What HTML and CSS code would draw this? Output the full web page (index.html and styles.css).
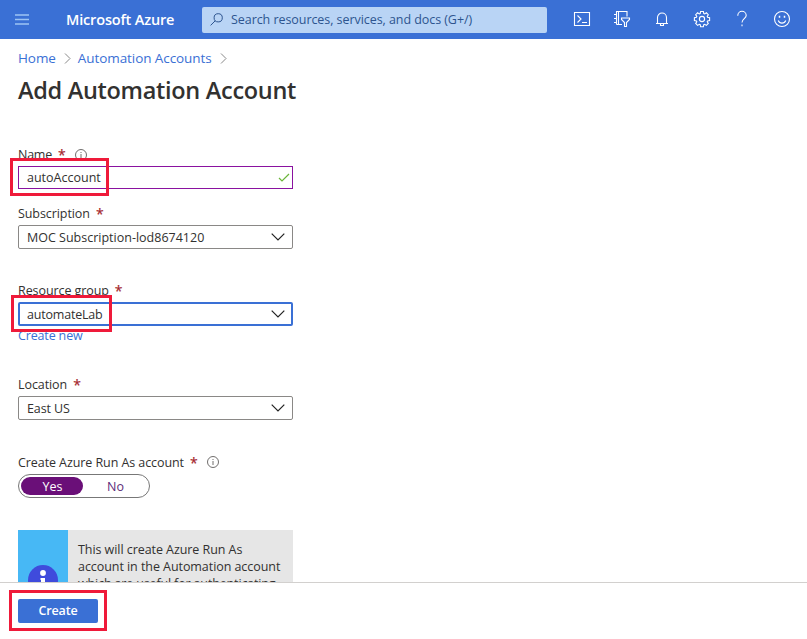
FILE: index.html
```html
<!DOCTYPE html>
<html lang="en">
<head>
<meta charset="utf-8">
<title>Add Automation Account - Microsoft Azure</title>
<link rel="stylesheet" href="styles.css">
</head>
<body>
<div class="app">
  <header class="topbar">
    <svg class="menu" width="14" height="11" viewBox="0 0 14 11"><path d="M0 1h14M0 5.5h14M0 10h14"/></svg>
    <span class="brand">Microsoft Azure</span>
    <div class="search">
      <svg width="13" height="13" viewBox="0 0 13 13"><circle cx="8.2" cy="4.8" r="4.1"/><path d="M5.2 7.8 .6 12.4"/></svg>
      <span>Search resources, services, and docs (G+/)</span>
    </div>
    <nav class="tools">
      <svg viewBox="0 0 18 18"><path d="M1.5 2.5h15v13h-15zM4.5 5.5l3.5 3.5-3.5 3.5M9 12.5h5"/></svg>
      <svg viewBox="0 0 18 18"><path d="M3.500 14.500V1.500h10.500v5M5.500 1.500v13M3.500 14.500H9M1 4.500h3M1 8.500h3M1 12.500h3M8.500 8h8v1.500l-3 3v4h-2v-4l-3-3z"/></svg>
      <svg viewBox="0 0 18 18"><path d="M4.500 13.500V7.500a4.500 4.500 0 0 1 9 0v6M3 13.500h12M7.500 14v1.500h3V14"/></svg>
      <svg class="gear" viewBox="0 0 18 18"><path d="M7.600 1.500h2.800l.4 2 .9.400 1.700-1.100 1.900 1.900-1.100 1.700.4.900 2 .4v2.800l-2 .4-.4.900 1.100 1.700-1.900 1.900-1.700-1.100-.9.400-.4 2H7.600l-.4-2-.9-.4-1.700 1.100-1.900-1.900 1.100-1.700-.4-.9-2-.4V7.700l2-.4.4-.9-1.100-1.700 1.900-1.900 1.700 1.100.9-.4z"/><circle cx="9" cy="9" r="2.600"/></svg>
      <svg viewBox="0 0 18 18"><path d="M4.800 5.800V5.500a4.200 4.200 0 0 1 8.400 0c0 3-4.200 3.500-4.200 7M9 14.600v1.600"/></svg>
      <svg viewBox="0 0 18 18"><circle cx="9" cy="9" r="7.500"/><path d="M5.200 10.500c1.500 3.500 6.100 3.500 7.600 0"/><path class="eyes" d="M6.500 5.800v2M11.500 5.800v2"/></svg>
    </nav>
  </header>

  <main class="content">
    <nav class="crumbs">
      <a>Home</a><svg width="7" height="11" viewBox="0 0 7 11"><path d="M1 .5l5 5-5 5"/></svg>
      <a>Automation Accounts</a><svg width="7" height="11" viewBox="0 0 7 11"><path d="M1 .5l5 5-5 5"/></svg>
    </nav>
    <h1>Add Automation Account</h1>

    <form class="form">
      <div class="field name">
        <label><span>Name</span><b>*</b><svg class="info" viewBox="0 0 12 12"><circle cx="6" cy="6" r="5.500"/><path d="M6 5v4M6 3v1"/></svg></label>
        <div class="box valid"><span>autoAccount</span><svg class="check" width="12" height="9" viewBox="0 0 12 9"><path d="M1 5l3 3 7-7"/></svg></div>
        <i class="mark mark-name"></i>
      </div>
      <div class="field sub">
        <label><span>Subscription</span><b>*</b></label>
        <div class="box"><span class="value-sub">MOC Subscription-lod8674120</span><svg width="14" height="8" viewBox="0 0 14 8"><path d="M.7.700 7 7 13.300.700"/></svg></div>
      </div>
      <div class="field group">
        <label><span>Resource group</span><b>*</b></label>
        <div class="box focus"><span>automateLab</span><svg width="14" height="8" viewBox="0 0 14 8"><path d="M.7.700 7 7 13.300.700"/></svg></div>
        <a class="new">Create new</a>
        <i class="mark mark-group"></i>
      </div>
      <div class="field loc">
        <label><span>Location</span><b>*</b></label>
        <div class="box"><span>East US</span><svg width="14" height="8" viewBox="0 0 14 8"><path d="M.7.700 7 7 13.300.700"/></svg></div>
      </div>
      <div class="field runas">
        <label><span>Create Azure Run As account</span><b>*</b><svg class="info" viewBox="0 0 12 12"><circle cx="6" cy="6" r="5.500"/><path d="M6 5v4M6 3v1"/></svg></label>
        <div class="toggle"><span class="on">Yes</span><span class="off">No</span></div>
      </div>
      <div class="notice">
        <div class="notice-icon"><svg width="30" height="30" viewBox="0 0 30 30"><circle class="disc" cx="15" cy="15" r="15"/><circle class="dot" cx="15" cy="8" r="2.900"/><path class="dot" d="M12.500 13H17v10h-4V15h-.5z"/></svg></div>
        <p><span>This will create Azure Run As</span><span>account in the Automation account</span><span class="tight">which are useful for authenticating</span></p>
      </div>
    </form>
  </main>

  <footer class="footer">
    <button type="button">Create<i class="mark mark-create"></i></button>
  </footer>
</div>
</body>
</html>
```
FILE: styles.css
```css
* { box-sizing: border-box; }
body { margin: 0; background: #fff; color: #323130; font: 12.5px/18px "Open Sans", "Noto Sans", sans-serif; }
svg { fill: none; stroke: currentColor; flex: none; }
a { color: #3a70d5; }
.app { width: 807px; height: 639px; display: flex; flex-direction: column; overflow: hidden; }

.topbar { height: 39px; flex: none; display: flex; align-items: center; padding: 0 16px 0 15px; background: #3a70d5; color: #fff; }
.menu { color: #9dc3f3; stroke-width: 1.6; }
.brand { width: 136px; margin-left: 37px; font-size: 14.5px; font-weight: 600; white-space: nowrap; letter-spacing: -.16px; }
.search { width: 345px; height: 26px; display: flex; align-items: center; gap: 8px; padding-left: 8px; border-radius: 2px; background: #b9d4f5; color: #2d548f; font-size: 12.5px; white-space: nowrap; letter-spacing: -.06px; }
.tools { flex: 1; display: flex; justify-content: flex-end; gap: 22px; margin-top: -1px; }
.tools svg { width: 18px; height: 18px; stroke-width: 1.1; }
.eyes { stroke-width: 1.5; }

.content { flex: 1; min-height: 0; overflow: hidden; padding: 10px 18px 0; }
.crumbs { display: flex; align-items: center; height: 18px; font-size: 13.5px; letter-spacing: -.08px; white-space: nowrap; }
.crumbs svg { color: #888; margin: 0 7px 0 8px; }
h1 { margin: 7px 0 0; font-size: 23.5px; line-height: 32px; font-weight: 600; letter-spacing: -.3px; white-space: nowrap; }

.form { width: 275px; margin-top: 40px; }
.field { position: relative; }
.field label { display: flex; align-items: center; height: 18px; padding-top: 2px; letter-spacing: -.08px; white-space: nowrap; }
.name label { padding-top: 0; }
.name label span { letter-spacing: -.25px; }
.field b { margin-left: 6px; color: #a4262c; font-size: 14px; font-weight: 400; -webkit-text-stroke: .2px #a4262c; }
.info { width: 12px; height: 12px; margin-left: 9px; color: #605e5c; stroke-width: .9; }
.runas .info { margin-top: -2px; }
.box { height: 24px; margin-top: 3px; display: flex; align-items: center; justify-content: space-between; padding: 0 7px 0 8px; border: 1px solid #8a8886; border-radius: 2px; white-space: nowrap; letter-spacing: -.1px; }
.box span { padding-top: 2px; }
.box .value-sub { letter-spacing: 0; }
.box svg { color: #222; stroke-width: 1.2; }
.box.valid { height: 23px; margin-top: 2px; padding-right: 2px; border-color: #8a12a0; border-radius: 0; letter-spacing: 0; }
.box.valid span { padding-top: 0; }
.box .check { color: #6bb53a; }
.box.focus { border: 2px solid #3a70d5; padding: 0 6px 0 7px; letter-spacing: -.2px; }
.sub { margin-top: 15px; }
.group { margin-top: 32px; }
.new { display: block; height: 18px; padding-top: 1px; letter-spacing: -.15px; }
.loc { margin-top: 31px; }
.runas { margin-top: 33px; }
.toggle { display: flex; width: 132px; height: 24px; margin-top: 3px; padding: 2px; border: 1px solid #777; border-radius: 12px; line-height: 20px; text-align: center; }
.on { flex: none; width: 62px; height: 18px; border-radius: 9px; background: #6a0f78; color: #fff; padding-left: 1px; }
.off { flex: 1; padding-left: 1px; color: #5c2d7a; }
.notice { display: flex; height: 80px; margin-top: 32px; background: #e6e6e6; }
.notice-icon { width: 50px; padding: 35px 10px 0; background: #47b8f5; }
.disc { fill: #3f4bdc; stroke: none; }
.dot { fill: #fff; stroke: none; }
.notice p { margin: 11px 0 0 10px; line-height: 17px; letter-spacing: -.06px; white-space: nowrap; }
.notice p span { display: block; }
.notice p .tight { letter-spacing: -.15px; }

.footer { height: 57px; flex: none; padding: 16px 18px; border-top: 1px solid #d2d0ce; background: #fff; }
.footer button { position: relative; display: block; width: 80px; height: 24px; padding: 0; border: 0; border-radius: 2px; background: #3a70d5; color: #fff; font: 600 12.5px/24px "Open Sans", sans-serif; letter-spacing: -.15px; }

.mark { position: absolute; border: 3px solid #ef1a3a; pointer-events: none; }
.mark-name { left: -8px; top: 12px; width: 99px; height: 38px; }
.mark-group { left: -7px; top: 14px; width: 101px; height: 37px; }
.mark-create { left: -9px; top: -9px; width: 98px; height: 41px; }
```
